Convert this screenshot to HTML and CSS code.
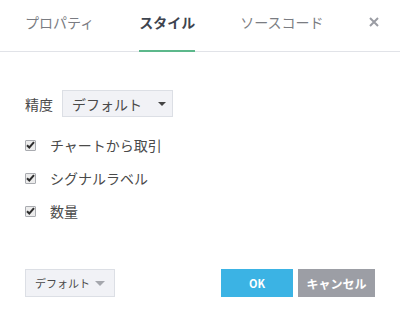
FILE: index.html
```html
<!DOCTYPE html>
<html lang="ja">
<head>
<meta charset="utf-8">
<link rel="stylesheet" href="styles.css">
</head>
<body>
<div class="dialog">
  <div class="header">
    <div class="tabs">
      <div class="tab">プロパティ</div>
      <div class="tab active">スタイル</div>
      <div class="tab">ソースコード</div>
    </div>
    <div class="close">
      <svg class="x" width="10" height="10" viewBox="0 0 10 10"><path d="M1 1L9 9M9 1L1 9" stroke="#9a9ca3" stroke-width="2"/></svg>
    </div>
  </div>
  <div class="content">
    <div class="field">
      <span class="label">精度</span>
      <div class="select">
        <span>デフォルト</span>
        <span class="caret"></span>
      </div>
    </div>
    <div class="checks">
      <label class="check"><span class="box"><svg width="9" height="8" viewBox="0 0 9 8"><path d="M1 4.2L3.3 6.5L8 1.2" stroke="#2d2d2d" stroke-width="2" fill="none"/></svg></span>チャートから取引</label>
      <label class="check"><span class="box"><svg width="9" height="8" viewBox="0 0 9 8"><path d="M1 4.2L3.3 6.5L8 1.2" stroke="#2d2d2d" stroke-width="2" fill="none"/></svg></span>シグナルラベル</label>
      <label class="check"><span class="box"><svg width="9" height="8" viewBox="0 0 9 8"><path d="M1 4.2L3.3 6.5L8 1.2" stroke="#2d2d2d" stroke-width="2" fill="none"/></svg></span>数量</label>
    </div>
  </div>
  <div class="footer">
    <div class="btn-default">
      <span>デフォルト</span>
      <span class="caret light"></span>
    </div>
    <div class="actions">
      <div class="btn ok">OK</div>
      <div class="btn cancel">キャンセル</div>
    </div>
  </div>
</div>
</body>
</html>
```
FILE: styles.css
```css
* { box-sizing: border-box; }
html, body { margin: 0; padding: 0; background: #fff; }
body {
  font-family: "Noto Sans CJK JP", "Noto Sans", sans-serif;
  color: #4a4a4a;
  width: 400px;
  height: 322px;
}
.dialog { display: flex; flex-direction: column; height: 322px; }
.header {
  height: 52px;
  border-bottom: 1px solid #e1e3e8;
  display: flex;
  justify-content: space-between;
  padding: 0 21px 0 25px;
}
.tabs { display: flex; gap: 45px; }
.tab {
  height: 52px;
  margin-bottom: -1px;
  padding-top: 12px;
  font-size: 14px;
  line-height: 20px;
  color: #7a7c82;
  border-bottom: 2px solid transparent;
}
.tab.active {
  color: #3e444f;
  font-weight: bold;
  border-bottom-color: #5cb88b;
}
.close { padding-top: 17px; }
.x { display: block; }
.content { padding: 38px 25px 0; }
.field { display: flex; align-items: center; gap: 9px; }
.label { font-size: 14px; color: #4a4a4a; }
.select {
  width: 111px;
  height: 27px;
  background: #f1f2f6;
  border: 1px solid #dcdfe5;
  display: flex;
  align-items: center;
  justify-content: space-between;
  padding: 0 6px 0 9px;
  font-size: 14px;
  color: #4a4a4a;
}
.caret {
  width: 0; height: 0;
  border-left: 4px solid transparent;
  border-right: 4px solid transparent;
  border-top: 4px solid #444;
}
.caret.light {
  border-left-width: 5px;
  border-right-width: 5px;
  border-top: 5px solid #a5a7ad;
}
.checks { display: flex; flex-direction: column; gap: 13px; margin-top: 18px; }
.check {
  display: flex;
  align-items: center;
  height: 20px;
  font-size: 14px;
  color: #4a4a4a;
}
.box {
  width: 11px; height: 11px;
  border: 1px solid #a9abb0;
  background: #ececec;
  border-radius: 1px;
  display: flex;
  align-items: center;
  justify-content: center;
  margin-right: 14px;
}
.footer {
  margin-top: auto;
  padding: 0 25px 25px;
  display: flex;
  justify-content: space-between;
  align-items: center;
}
.btn-default {
  width: 90px;
  height: 28px;
  background: #f1f2f6;
  border: 1px solid #dcdfe5;
  display: flex;
  align-items: center;
  justify-content: space-between;
  padding: 0 9px 0 9px;
  font-size: 11px;
  color: #4a4a4a;
}
.actions { display: flex; gap: 5px; }
.btn {
  height: 28px;
  display: flex;
  align-items: center;
  justify-content: center;
  color: #fff;
  font-weight: bold;
  font-size: 11px;
}
.ok { width: 72px; background: #3bb3e4; }
.cancel { width: 77px; background: #9c9ea5; font-size: 12px; }
```
